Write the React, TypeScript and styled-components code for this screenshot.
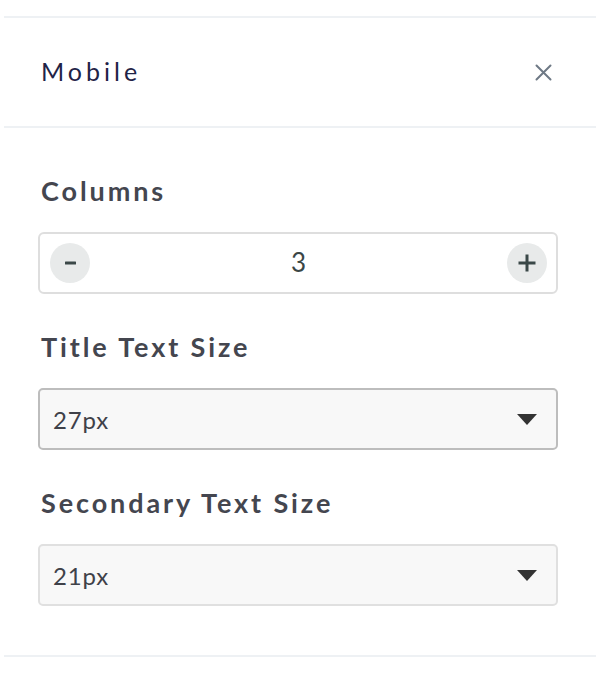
import React, { useState } from "react";
import styled, { createGlobalStyle } from "styled-components";

const GlobalStyle = createGlobalStyle`
  html, body {
    margin: 0;
    padding: 0;
    background: #ffffff;
  }
  body {
    font-family: Lato, "Open Sans", sans-serif;
  }
`

const Panel = styled.div`
  margin: 16px 0 0 4px;
  border-top: 2px solid #eef1f4;
  border-bottom: 2px solid #eef1f4;
  padding-bottom: 49px;
`
const Header = styled.div`
  display: flex;
  align-items: center;
  justify-content: space-between;
  height: 108px;
  padding: 0 42px 0 37px;
  border-bottom: 2px solid #eef1f4;
`
const Title = styled.div`
  font-size: 25px;
  font-weight: 400;
  letter-spacing: 4px;
  color: #1f2347;
  margin-bottom: 3px;
`
const CloseButton = styled.button`
  display: flex;
  align-items: center;
  justify-content: center;
  width: 22px;
  height: 22px;
  padding: 0;
  border: none;
  background: none;
  color: #6e7985;
  cursor: pointer;
`
const Body = styled.div`
  padding: 48px 38px 0 34px;
`
const Field = styled.div`
  & + & {
    margin-top: 38px;
  }
`
const Label = styled.div`
  height: 30px;
  line-height: 30px;
  font-size: 27px;
  font-weight: 700;
  letter-spacing: 2.9px;
  color: #44464f;
  padding-left: 3px;
  margin-bottom: 26px;
`
const Stepper = styled.div`
  display: flex;
  align-items: center;
  justify-content: space-between;
  box-sizing: border-box;
  height: 62px;
  padding: 0 9px 0 10px;
  border: 2px solid #dedede;
  border-radius: 6px;
  background: #ffffff;
`
const StepButton = styled.button`
  display: flex;
  align-items: center;
  justify-content: center;
  width: 40px;
  height: 40px;
  padding: 0;
  border: none;
  border-radius: 50%;
  background: #e8eaea;
  color: #3b4848;
  cursor: pointer;
`
const StepValue = styled.div`
  font-size: 26px;
  color: #3b4646;
  margin-bottom: 2px;
`
const Select = styled.div<{ $active?: boolean }>`
  display: flex;
  align-items: center;
  justify-content: space-between;
  box-sizing: border-box;
  height: 62px;
  padding: 0 19px 0 13px;
  border: 2px solid ${(p) => (p.$active ? "#bdbdbd" : "#e0e0e0")};
  border-radius: 5px;
  background: #f8f8f8;
  font-size: 24px;
  letter-spacing: 0.8px;
  color: #3f4149;
  cursor: pointer;
`
const Caret = styled.svg`
  width: 20px;
  height: 11px;
  fill: #333333;
`

const CloseIcon = () => (
  <svg width="17" height="17" viewBox="0 0 17 17">
    <path d="M1.5 1.5 L15.5 15.5 M15.5 1.5 L1.5 15.5" stroke="currentColor" strokeWidth="2" strokeLinecap="round" />
  </svg>
)

const MinusIcon = () => (
  <svg width="11" height="4" viewBox="0 0 11 4">
    <rect x="0" y="0.5" width="11" height="3" rx="0.5" fill="currentColor" />
  </svg>
)

const PlusIcon = () => (
  <svg width="18" height="18" viewBox="0 0 18 18">
    <path d="M9 0.5 V17.5 M0.5 9 H17.5" stroke="currentColor" strokeWidth="3" />
  </svg>
)

const Dropdown = (props: { value: string; active?: boolean }) => (
  <Select $active={props.active}>
    <span>{props.value}</span>
    <Caret viewBox="0 0 20 11">
      <path d="M0 0 H20 L10 11 Z" />
    </Caret>
  </Select>
)

const App = () => {
  const [columns, setColumns] = useState(3)

  return (
    <>
      <GlobalStyle />
      <Panel>
        <Header>
          <Title>Mobile</Title>
          <CloseButton aria-label="close"><CloseIcon /></CloseButton>
        </Header>
        <Body>
          <Field>
            <Label>Columns</Label>
            <Stepper>
              <StepButton onClick={() => setColumns(Math.max(1, columns - 1))}><MinusIcon /></StepButton>
              <StepValue>{columns}</StepValue>
              <StepButton onClick={() => setColumns(columns + 1)}><PlusIcon /></StepButton>
            </Stepper>
          </Field>
          <Field>
            <Label>Title Text Size</Label>
            <Dropdown value="27px" active />
          </Field>
          <Field>
            <Label>Secondary Text Size</Label>
            <Dropdown value="21px" />
          </Field>
        </Body>
      </Panel>
    </>
  )
}

export default App;
